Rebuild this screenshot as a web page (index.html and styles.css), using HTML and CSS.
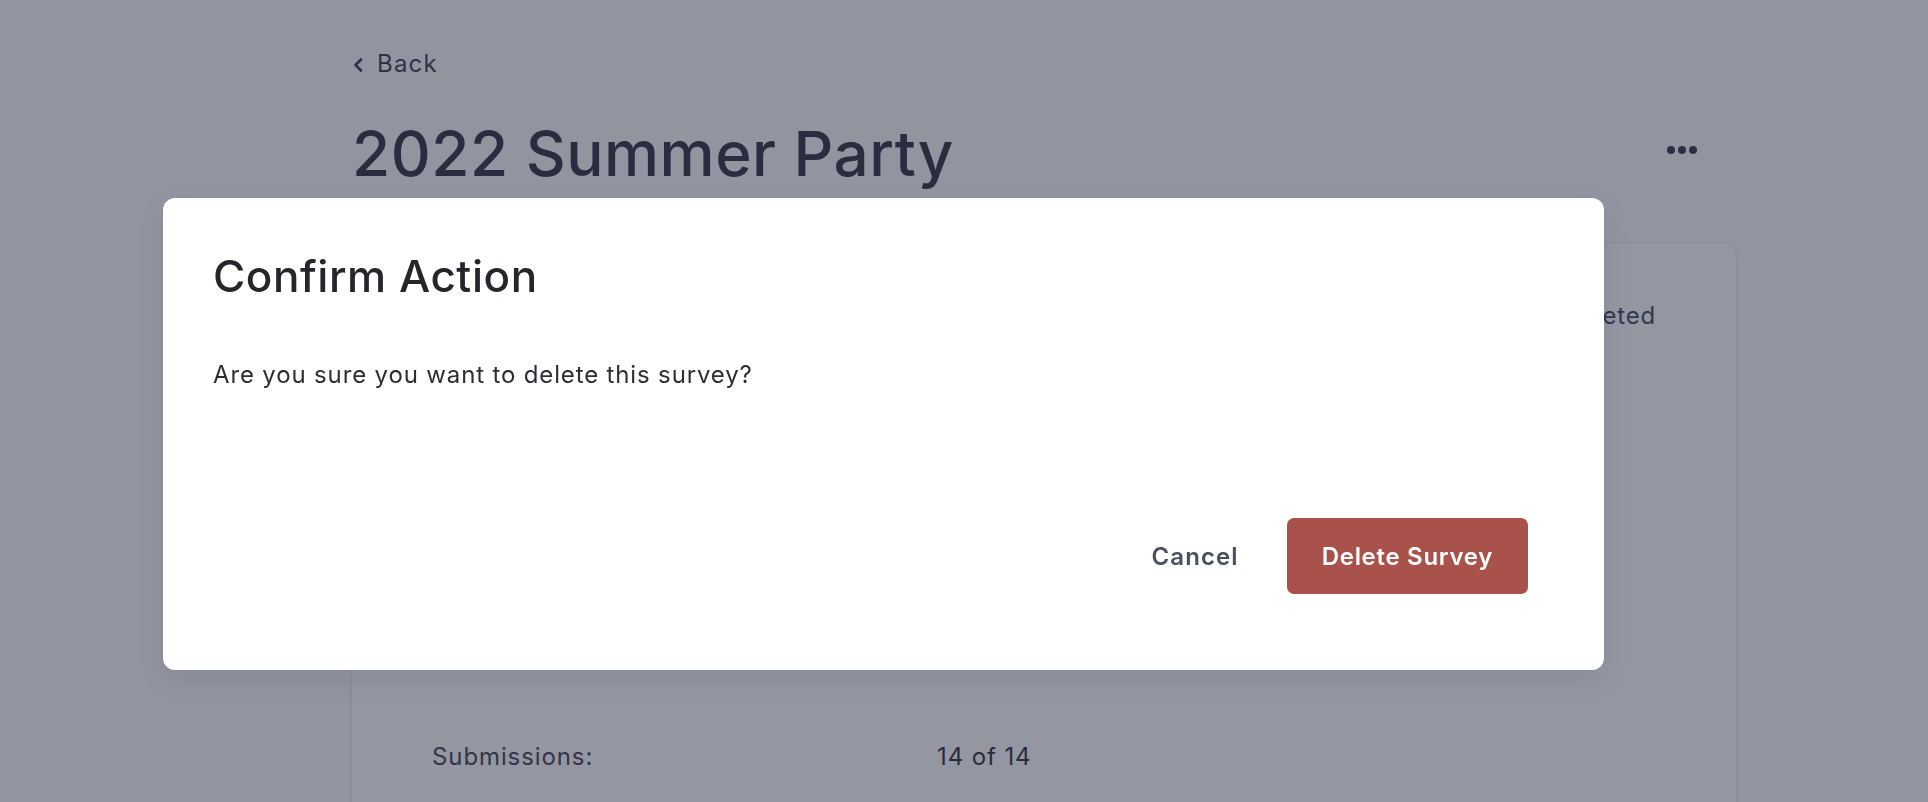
FILE: index.html
```html
<!DOCTYPE html>
<html lang="en">
<head>
<meta charset="utf-8">
<title>2022 Summer Party</title>
<link rel="stylesheet" href="styles.css">
</head>
<body>
  <main class="content">
    <a class="back" href="#">
      <svg class="chev" width="12" height="16" viewBox="0 0 12 16" aria-hidden="true"><path d="M9 2.5 L3.5 8 L9 13.5" fill="none" stroke="currentColor" stroke-width="2.6" stroke-linecap="round" stroke-linejoin="round"/></svg>
      <span>Back</span>
    </a>
    <div class="header">
      <h1 class="title">2022 Summer Party</h1>
      <button class="more" type="button" aria-label="More options">
        <span class="dot"></span><span class="dot"></span><span class="dot"></span>
      </button>
    </div>
    <section class="card">
      <div class="card-top">
        <span class="status">Completed</span>
      </div>
      <dl class="details">
        <div class="row">
          <dt>Submissions:</dt>
          <dd>14 of 14</dd>
        </div>
      </dl>
    </section>
  </main>

  <div class="overlay"></div>

  <div class="modal" role="dialog" aria-labelledby="modal-title">
    <h2 id="modal-title" class="modal-title">Confirm Action</h2>
    <p class="modal-text">Are you sure you want to delete this survey?</p>
    <div class="modal-actions">
      <button class="btn btn-cancel" type="button">Cancel</button>
      <button class="btn btn-danger" type="button">Delete Survey</button>
    </div>
  </div>
</body>
</html>
```

FILE: styles.css
```css
* { box-sizing: border-box; }

html, body {
  margin: 0;
  height: 100%;
}

body {
  font-family: Inter, "Noto Sans", "Liberation Sans", sans-serif;
  background: #fafafb;
  color: #1f2233;
  overflow: hidden;
}

.content {
  height: 100vh;
  overflow: hidden;
  padding: 48px 192px 0 352px;
}

.back {
  display: inline-flex;
  align-items: center;
  gap: 13px;
  font-size: 24px;
  line-height: 32px;
  letter-spacing: 1.2px;
  color: #1f2233;
  text-decoration: none;
}

.chev { display: block; margin-top: 1px; }

.header {
  display: flex;
  align-items: center;
  justify-content: space-between;
  margin-top: 37px;
  padding-right: 29px;
}

.title {
  margin: 0;
  font-size: 62px;
  line-height: 1.2;
  font-weight: 500;
  letter-spacing: 0.5px;
  color: #141626;
}

.more {
  display: flex;
  gap: 3px;
  padding: 10px;
  margin-bottom: 8px;
  background: none;
  border: 0;
}

.dot {
  width: 8px;
  height: 8px;
  border-radius: 50%;
  background: #1a1d33;
}

.card {
  margin-top: 52px;
  background: #ffffff;
  border-radius: 14px;
  box-shadow: 0 1px 4px rgba(20, 22, 38, 0.10), 0 0 0 1px rgba(20, 22, 38, 0.04);
  padding: 55px 80px 80px;
  min-height: 700px;
}

.card-top {
  display: flex;
  justify-content: flex-end;
  font-size: 24px;
  line-height: 36px;
  letter-spacing: 0.8px;
  color: #2a2d3f;
}

.details {
  margin: 405px 0 0;
}

.row {
  display: grid;
  grid-template-columns: 505px 1fr;
  font-size: 24px;
  line-height: 36px;
  letter-spacing: 0.9px;
}

.row dt { color: #262939; }
.row dd { margin: 0; color: #101220; }

.overlay {
  position: fixed;
  inset: 0;
  background: rgba(60, 64, 85, 0.55);
}

.modal {
  position: fixed;
  left: 163px;
  top: 198px;
  width: 1441px;
  height: 472px;
  background: #ffffff;
  border-radius: 12px;
  box-shadow: 0 10px 30px rgba(0, 0, 0, 0.08);
  padding: 52px 76px 76px 50px;
  display: flex;
  flex-direction: column;
}

.modal-title {
  margin: 0;
  font-size: 44px;
  line-height: 1.2;
  font-weight: 500;
  letter-spacing: 0.55px;
  color: #25262b;
}

.modal-text {
  margin: 54px 0 0;
  font-size: 24px;
  line-height: 36px;
  letter-spacing: 0.85px;
  color: #2c2d35;
}

.modal-actions {
  margin-top: auto;
  display: flex;
  justify-content: flex-end;
  gap: 13px;
}

.btn {
  height: 76px;
  padding: 0 35px;
  font-family: inherit;
  font-size: 24px;
  font-weight: 600;
  letter-spacing: 0.7px;
  border: 0;
  border-radius: 7px;
  cursor: pointer;
}

.btn-cancel {
  background: transparent;
  color: #4b5060;
  letter-spacing: 1.1px;
}

.btn-danger {
  background: #a8524b;
  color: #ffffff;
}
```
